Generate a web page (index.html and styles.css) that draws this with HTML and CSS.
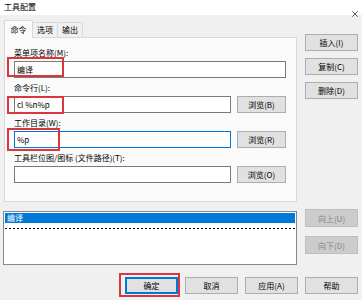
FILE: index.html
```html
<!DOCTYPE html>
<html lang="zh-CN">
<head>
<meta charset="utf-8">
<title>工具配置</title>
<link rel="stylesheet" href="styles.css">
</head>
<body>
<div class="window">
  <div class="titlebar">
    <span class="title">工具配置</span>
    <svg class="close" width="6" height="6" viewBox="0 0 6 6"><path d="M0.3 0.3L5.7 5.7M5.7 0.3L0.3 5.7" stroke="#333" stroke-width="0.8"/></svg>
  </div>
  <div class="top">
    <div class="tabarea">
      <div class="tabs">
        <div class="tab active">命令</div>
        <div class="tab">选项</div>
        <div class="tab">输出</div>
      </div>
      <div class="panel">
        <div class="field">
          <div class="label">菜单项名称(M):</div>
          <div class="input full">编译</div>
        </div>
        <div class="field">
          <div class="label">命令行(L):</div>
          <div class="row"><div class="input">cl %n%p</div><div class="btn browse">浏览(B)</div></div>
        </div>
        <div class="field">
          <div class="label">工作目录(W):</div>
          <div class="row"><div class="input focus">%p</div><div class="btn browse">浏览(R)</div></div>
        </div>
        <div class="field">
          <div class="label">工具栏位图/图标 (文件路径)(T):</div>
          <div class="row"><div class="input"></div><div class="btn browse">浏览(O)</div></div>
        </div>
      </div>
    </div>
    <div class="side">
      <div class="btn">插入(I)</div>
      <div class="btn">复制(C)</div>
      <div class="btn">删除(D)</div>
    </div>
  </div>
  <div class="listrow">
    <div class="list">
      <div class="item sel">编译</div>
      <div class="item sep"></div>
    </div>
    <div class="side2">
      <div class="btn disabled">向上(U)</div>
      <div class="btn disabled">向下(D)</div>
    </div>
  </div>
  <div class="footer">
    <div class="btn default">确定</div>
    <div class="btn">取消</div>
    <div class="btn">应用(A)</div>
    <div class="btn">帮助</div>
  </div>
  <div class="mark m1"></div>
  <div class="mark m2"></div>
  <div class="mark m3"></div>
  <div class="mark m4"></div>
</div>
</body>
</html>
```
FILE: styles.css
```css
* { box-sizing: border-box; }
body {
  margin: 0;
  background: #f0f0f0;
  font-family: "Noto Sans CJK SC", "Noto Sans", sans-serif;
  font-size: 8px;
  color: #000;
}
.window {
  position: relative;
  width: 362px;
  height: 300px;
  overflow: hidden;
}
.titlebar {
  height: 15px;
  background: #fff;
  display: flex;
  justify-content: space-between;
  align-items: flex-start;
  padding: 0 4px;
}
.title { line-height: 14px; }
.close { margin-top: 11px; }
.top {
  display: flex;
  gap: 8px;
  padding: 5px 4px 0;
}
.tabarea { width: 293px; }
.tabs {
  display: flex;
  align-items: flex-end;
  height: 17px;
}
.tab {
  width: 25px;
  height: 15px;
  border: 1px solid #d9d9d9;
  border-left: none;
  border-bottom: none;
  background: #f0f0f0;
  text-align: center;
  line-height: 14px;
}
.tab.active {
  width: 29px;
  height: 18px;
  border-left: 1px solid #d9d9d9;
  background: #fafafa;
  margin-bottom: -1px;
  position: relative;
  z-index: 1;
  line-height: 17px;
}
.panel {
  height: 165px;
  border: 1px solid #d9d9d9;
  background: #fafafa;
  padding: 9px 10px 0 9px;
  display: flex;
  flex-direction: column;
  gap: 4px;
}
.field {
  display: flex;
  flex-direction: column;
  gap: 3px;
}
.label { height: 11px; line-height: 11px; }
.row { display: flex; gap: 6px; }
.input {
  width: 217px;
  height: 17px;
  border: 1px solid #7a7a7a;
  background: #fff;
  line-height: 15px;
  padding-left: 2px;
}
.input.full { width: 272px; }
.input.focus { border-color: #0078d7; }
.btn {
  height: 17px;
  border: 1px solid #adadad;
  background: #e1e1e1;
  display: flex;
  align-items: center;
  justify-content: center;
}
.browse { width: 49px; }
.side {
  width: 53px;
  display: flex;
  flex-direction: column;
  gap: 7px;
  padding-top: 14px;
}
.listrow {
  display: flex;
  gap: 8px;
  padding: 0 4px 0 3px;
  margin-top: 7px;
}
.list {
  width: 294px;
  height: 54px;
  margin-top: 2px;
  border: 1px solid #828790;
  background: #fff;
  padding: 1px;
}
.item { height: 10px; line-height: 10px; padding-left: 2px; }
.item.sel { background: #0078d7; color: #fff; }
.item.sep {
  background: repeating-linear-gradient(to right, #000 0 2px, transparent 2px 4px) 0 5px / 100% 1px no-repeat;
}
.side2 {
  width: 53px;
  display: flex;
  flex-direction: column;
  gap: 9px;
}
.side2 .btn { height: 18px; }
.btn.disabled {
  background: #cccccc;
  border-color: #bfbfbf;
  color: #838383;
}
.footer {
  display: flex;
  justify-content: flex-end;
  gap: 7px;
  padding-right: 4px;
  margin-top: 12px;
}
.footer .btn { width: 53px; }
.btn.default {
  border-color: #0078d7;
  box-shadow: inset 0 0 0 1px #0078d7;
}
.mark {
  position: absolute;
  border: 2px solid #d9363e;
}
.m1 { left: 7px; top: 57px; width: 57px; height: 20px; }
.m2 { left: 7px; top: 96px; width: 57px; height: 18px; }
.m3 { left: 7px; top: 128px; width: 53px; height: 23px; }
.m4 { left: 119px; top: 273px; width: 61px; height: 24px; }
```
